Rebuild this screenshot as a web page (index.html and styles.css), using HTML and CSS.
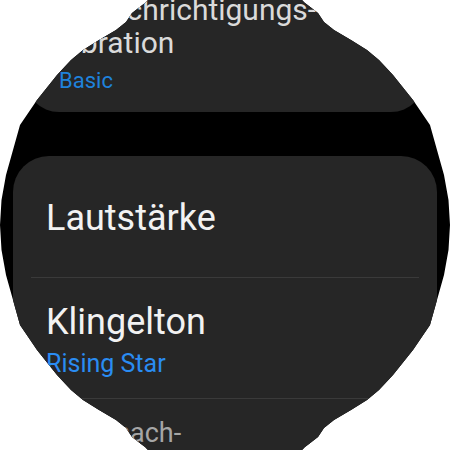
FILE: index.html
```html
<!DOCTYPE html>
<html lang="de">
<head>
<meta charset="utf-8">
<title>Töne und Vibration</title>
<link rel="stylesheet" href="styles.css">
</head>
<body>
<div class="screen">
  <div class="card card-top">
    <div class="title title-small">Benachrichtigungs-<br>vibration</div>
    <div class="sub sub-small">Basic</div>
  </div>
  <div class="card card-main">
    <div class="item item-first">
      <div class="title">Lautstärke</div>
    </div>
    <div class="divider"></div>
    <div class="item item-second">
      <div class="title">Klingelton</div>
      <div class="sub">Rising Star</div>
    </div>
    <div class="divider"></div>
    <div class="item item-third">
      <div class="title title-faded">Benach-</div>
    </div>
  </div>
</div>
</body>
</html>
```
FILE: styles.css
```css
html, body {
  margin: 0;
  padding: 0;
  width: 450px;
  height: 450px;
  overflow: hidden;
  background: #ffffff;
}

body {
  font-family: Roboto, "Noto Sans", sans-serif;
}

.screen {
  width: 450px;
  height: 450px;
  background: #000000;
  overflow: hidden;
  display: flex;
  flex-direction: column;
  clip-path: polygon(
    148px 0, 302px 0, 305px 3px, 309px 6px, 318px 13px, 324px 22px,
    334px 30px, 351px 40px, 367px 50px, 379px 60px, 393px 75px,
    413px 100px, 430px 125px, 437px 150px, 444px 175px, 448.5px 200px,
    450px 225px, 448.5px 250px, 444px 275px, 437px 300px, 430px 325px,
    413px 350px, 393px 375px, 379px 390px, 367px 400px, 351px 410px,
    334px 420px, 324px 428px, 318px 437px, 309px 444px, 305px 447px,
    302px 450px, 148px 450px, 145px 447px, 141px 444px, 132px 437px,
    126px 428px, 116px 420px, 99px 410px, 83px 400px, 71px 390px,
    57px 375px, 37px 350px, 20px 325px, 13px 300px, 6px 275px,
    1.5px 250px, 0 225px, 1.5px 200px, 6px 175px, 13px 150px,
    20px 125px, 37px 100px, 57px 75px, 71px 60px, 83px 50px,
    99px 40px, 116px 30px, 126px 22px, 132px 13px, 141px 6px,
    145px 3px
  );
}

.card {
  background: #262626;
  flex-shrink: 0;
}

.card-top {
  margin: -17px 25px 0;
  padding: 10px 34px 18.5px;
  border-radius: 0 0 34px 34px;
}

.card-main {
  margin: 44px 13px 0;
  border-radius: 36px 36px 0 0;
  flex-grow: 1;
}

.title {
  font-size: 36px;
  line-height: 42px;
  color: #f2f2f2;
  white-space: nowrap;
}

.title-small {
  font-size: 30px;
  line-height: 33px;
  color: #dadada;
}

.title-faded {
  font-size: 27px;
  line-height: 32px;
  color: #a6a6a6;
}

.sub {
  font-size: 25px;
  line-height: 29px;
  color: #2a8cf2;
  margin-top: 6px;
  white-space: nowrap;
}

.sub-small {
  font-size: 22px;
  line-height: 26px;
  color: #1f82dc;
  margin-top: 8.5px;
}

.item {
  padding: 0 33px;
}

.item-first {
  padding-top: 41px;
  padding-bottom: 38px;
}

.item-second {
  padding-top: 23px;
  padding-bottom: 20px;
}

.item-third {
  padding-top: 17.5px;
  padding-left: 71px;
}

.divider {
  height: 1px;
  margin: 0 18px;
  background: #3a3a3a;
}
```
